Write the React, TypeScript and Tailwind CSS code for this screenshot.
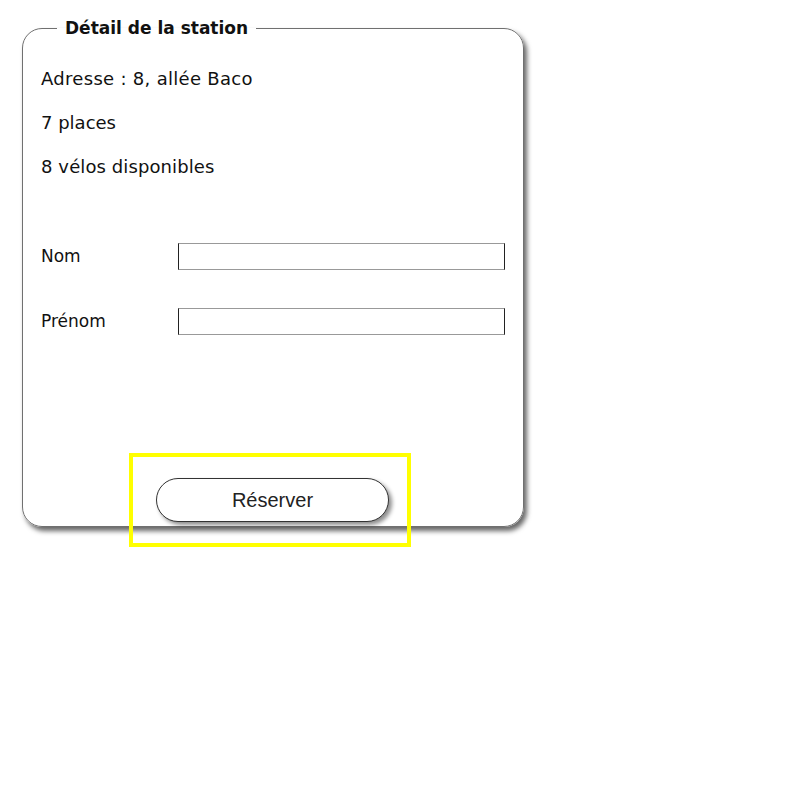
import React from 'react';

const font = { fontFamily: '"DejaVu Sans", sans-serif' };

export default function App() {
  return (
    <div className="w-[800px] h-[800px] bg-white pl-[22px] pt-[17px]" style={font}>
      <fieldset className="w-[500px] h-[510px] border border-[#707070] rounded-[20px] px-[18px] shadow-[3px_4px_5px_rgba(0,0,0,0.6)] flex flex-col">
        <legend className="ml-[16px] px-[8px] text-[17px] leading-[22px] font-bold text-[#111]">
          Détail de la station
        </legend>
        <div className="text-[18px] leading-[22px] text-[#111] flex flex-col gap-[22px] mt-[29px]">
          <p className="tracking-[0.3px]">Adresse : 8, allée Baco</p>
          <p>7 places</p>
          <p className="tracking-[0.1px]">8 vélos disponibles</p>
        </div>
        <div className="flex flex-col gap-[38px] mt-[65px] text-[17px] text-[#111]">
          <label className="flex items-center">
            <span className="w-[137px]">Nom</span>
            <input type="text" className="w-[327px] h-[27px] border border-[#222] border-t-[#999] border-b-[#999] bg-white" />
          </label>
          <label className="flex items-center">
            <span className="w-[137px]">Prénom</span>
            <input type="text" className="w-[327px] h-[27px] border border-[#222] border-t-[#999] border-b-[#999] bg-white" />
          </label>
        </div>
        <div className="flex-1" />
        <div className="mb-[4px] ml-[113px] w-[232px] outline-4 outline-[#ffff00] outline-offset-[21px]">
          <button
            className="ml-[2px] w-[233px] h-[44px] rounded-full border border-[#333] bg-white text-[20px] text-[#222] shadow-[3px_3px_4px_rgba(0,0,0,0.45)]"
            style={{ fontFamily: '"Liberation Sans", Arial, sans-serif' }}
          >
            Réserver
          </button>
        </div>
      </fieldset>
    </div>
  );
}
